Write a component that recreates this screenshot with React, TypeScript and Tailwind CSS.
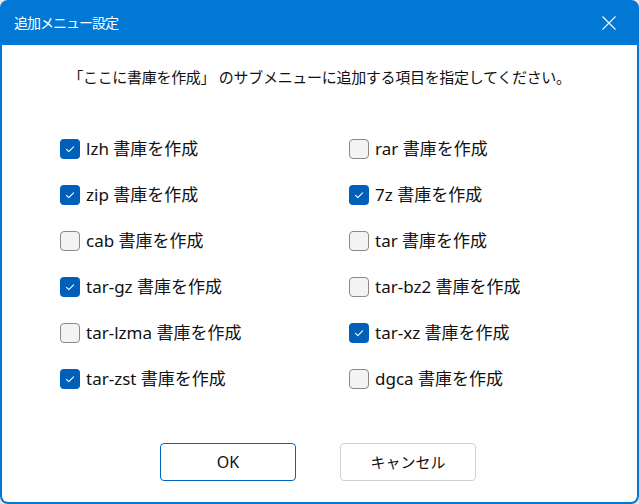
import { useState } from "react";

const items = [
  { id: "lzh", checked: true },
  { id: "rar", checked: false },
  { id: "zip", checked: true },
  { id: "7z", checked: true },
  { id: "cab", checked: false },
  { id: "tar", checked: false },
  { id: "tar-gz", checked: true },
  { id: "tar-bz2", checked: false },
  { id: "tar-lzma", checked: false },
  { id: "tar-xz", checked: true },
  { id: "tar-zst", checked: true },
  { id: "dgca", checked: false },
];

function CheckRow({ label, checked, onToggle }: { label: string; checked: boolean; onToggle: () => void }) {
  return (
    <button type="button" onClick={onToggle} className="flex items-center gap-[6px] h-[20px] text-left">
      {checked ? (
        <span className="w-[20px] h-[20px] rounded-[4px] bg-[#005fb8] flex items-center justify-center shrink-0">
          <svg width="20" height="20" viewBox="0 0 20 20" fill="none">
            <path d="M6.5 10.3 L8.8 12.6 L13.6 7.8" stroke="white" strokeWidth="1.1" strokeLinecap="round" strokeLinejoin="round" />
          </svg>
        </span>
      ) : (
        <span className="w-[20px] h-[20px] rounded-[4px] bg-[#f3f3f3] border border-[#8a8a8a] shrink-0" />
      )}
      <span className="text-[17px] leading-[20px] text-[#111]">{label} 書庫を作成</span>
    </button>
  );
}

export default function App() {
  const [state, setState] = useState(items);

  return (
    <div
      className="w-[639px] h-[504px] bg-[#e8e8e8]"
      style={{ fontFamily: '"Noto Sans", "Noto Sans CJK JP", sans-serif' }}
    >
      <div className="w-full h-full flex flex-col bg-[#0078d4] rounded-[8px] overflow-hidden p-[2px] pt-0">
        <div className="h-[45px] flex items-center justify-between pl-[12px] pr-[20px] shrink-0">
          <span className="text-white text-[14px] tracking-[-1px] leading-[20px]">追加メニュー設定</span>
          <svg width="16" height="16" viewBox="0 0 16 16" fill="none">
            <path d="M1.5 1.5 L14.5 14.5 M14.5 1.5 L1.5 14.5" stroke="white" strokeWidth="1.1" />
          </svg>
        </div>
        <div className="flex-1 bg-white rounded-b-[6px] flex flex-col">
          <p className="mt-[22px] text-center text-[15px] tracking-[-0.3px] leading-[20px] text-[#111]">
            「ここに書庫を作成」 のサブメニューに追加する項目を指定してください。
          </p>
          <div className="mt-[52px] ml-[58px] grid grid-cols-[289px_289px] gap-y-[26px]">
            {state.map((it, i) => (
              <CheckRow
                key={it.id}
                label={it.id}
                checked={it.checked}
                onToggle={() =>
                  setState((s) => s.map((x, j) => (j === i ? { ...x, checked: !x.checked } : x)))
                }
              />
            ))}
          </div>
          <div className="mt-[54px] flex gap-[44px] ml-[158px]">
            <button className="w-[136px] h-[38px] rounded-[4px] border border-[#0067c0] bg-white text-[16px] text-[#111]">
              OK
            </button>
            <button className="w-[136px] h-[38px] rounded-[4px] border border-[#d0d0d0] bg-white text-[15px] text-[#111]">
              キャンセル
            </button>
          </div>
        </div>
      </div>
    </div>
  );
}
